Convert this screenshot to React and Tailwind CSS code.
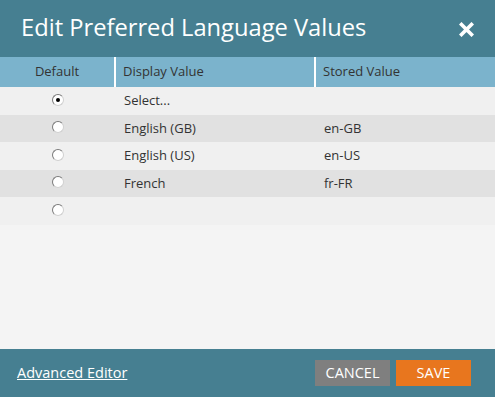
import React from 'react';

const rows = [
    { display: 'Select...', stored: '', checked: true, h: 'h-[28px]', bg: 'bg-[#f0f0f0]' },
    { display: 'English (GB)', stored: 'en-GB', h: 'h-[27px]', bg: 'bg-[#e1e1e1]' },
    { display: 'English (US)', stored: 'en-US', h: 'h-[28px]', bg: 'bg-[#f0f0f0]' },
    { display: 'French', stored: 'fr-FR', h: 'h-[27px]', bg: 'bg-[#e1e1e1]' },
    { display: '', stored: '', h: 'h-[28px]', bg: 'bg-[#f0f0f0]' },
];

function Radio({ checked }) {
    return (
        <span className="w-[12px] h-[12px] rounded-full bg-white border border-[#7a7a7a] border-r-[#d0d0d0] border-b-[#d0d0d0] flex items-center justify-center">
            {checked && <span className="w-[4px] h-[4px] rounded-full bg-black" />}
        </span>
    );
}

export default function App() {
    return (
        <div className="w-[495px] h-[397px] flex flex-col bg-[#f4f4f4] font-['Open_Sans',sans-serif] text-[#333]">
            <div className="h-[57px] shrink-0 bg-[#467f91] flex items-center justify-between pl-[21px] pr-[21px]">
                <h1 className="text-[23.7px] text-white leading-none pb-[1px]">Edit Preferred Language Values</h1>
                <svg width="15" height="15" viewBox="0 0 15 15" className="mt-[2px]">
                    <path d="M2.5 2.5 L12.5 12.5 M12.5 2.5 L2.5 12.5" stroke="white" strokeWidth="3.6" strokeLinecap="square" />
                </svg>
            </div>
            <div className="flex-1">
                <div className="h-[30px] bg-[#7bb3cc] flex text-[13px]">
                    <div className="w-[116px] border-r-2 border-white flex items-center justify-center">Default</div>
                    <div className="w-[200px] border-r-2 border-white flex items-center pl-[7px]">Display Value</div>
                    <div className="flex-1 flex items-center pl-[7px]">Stored Value</div>
                </div>
                {rows.map((row, i) => (
                    <div key={i} className={`${row.h} ${row.bg} flex text-[13px]`}>
                        <div className="w-[116px] flex items-center justify-center pb-[3px]">
                            <Radio checked={row.checked} />
                        </div>
                        <div className="w-[200px] flex items-center pl-[8px]">{row.display}</div>
                        <div className="flex-1 flex items-center pl-[8px]">{row.stored}</div>
                    </div>
                ))}
            </div>
            <div className="h-[48px] shrink-0 bg-[#467f91] flex items-center justify-between pl-[17px] pr-[24px]">
                <a href="#" className="text-white text-[14.5px] underline">Advanced Editor</a>
                <div className="flex gap-[6px]">
                    <button className="w-[75px] h-[26px] bg-[#7f7f7f] text-white text-[14.5px]">CANCEL</button>
                    <button className="w-[75px] h-[26px] bg-[#e8761e] text-white text-[14.5px]">SAVE</button>
                </div>
            </div>
        </div>
    );
}
